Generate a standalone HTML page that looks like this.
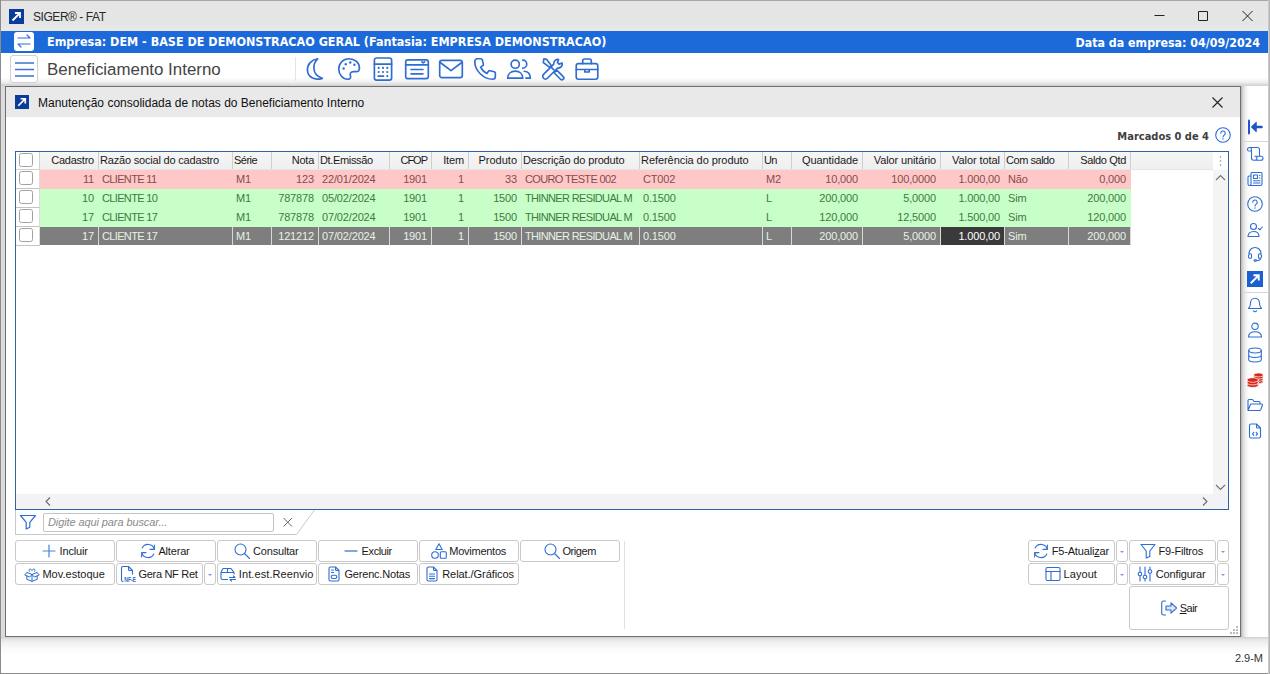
<!DOCTYPE html>
<html lang="pt-BR">
<head>
<meta charset="utf-8">
<title>SIGER - FAT</title>
<style>
*{box-sizing:border-box;margin:0;padding:0}
html,body{width:1270px;height:674px;overflow:hidden;background:#fff}
body{font-family:"Liberation Sans","DejaVu Sans",sans-serif;font-size:11px;color:#1a1a1a;position:relative}
.bold{font-family:"DejaVu Sans Condensed","Liberation Sans",sans-serif;font-weight:bold}
#win{position:absolute;left:0;top:0;width:1270px;height:674px;background:#fff}
#lb{position:absolute;left:0;top:0;width:1px;height:674px;background:#8c8c8c}
#rb{position:absolute;left:1268px;top:0;width:2px;height:674px;background:linear-gradient(90deg,#d8d8d8,#a8a8a8)}
#titlebar{position:absolute;left:1px;top:0;width:1268px;height:31px;background:linear-gradient(#e5e5e5 0,#e5e5e5 75%,#eaeaea 100%);border-top:1px solid #a6a6a6}
#titlebar .ttl{position:absolute;left:32px;top:9px;font-size:12px;color:#2a2a2a;letter-spacing:-.45px;white-space:nowrap}
.appico{position:absolute;width:15px;height:15px}
#bluebar{position:absolute;left:1px;top:31px;width:1268px;height:22px;background:#1c69d9;color:#fff}
#bluebar .l{position:absolute;left:46px;top:3px;font-size:12.46px;white-space:nowrap}
#bluebar .r{position:absolute;right:9px;top:5px;font-size:12.3px;white-space:nowrap}
#swap{position:absolute;left:13px;top:1px;width:20px;height:19px;background:#fff;border-radius:3px}
#toolbar{position:absolute;left:1px;top:53px;width:1268px;height:33px;background:linear-gradient(#fff 0,#fff 74%,#f0f0f0 88%,#cfcfcf 100%)}
#toolbar .name{position:absolute;left:46px;top:7px;font-size:16.9px;color:#444;white-space:nowrap}
#ham{position:absolute;left:9px;top:2px;width:28px;height:28px;border:1px solid #d0d0d0;border-radius:3px;background:#fff}
#tsep{position:absolute;left:294px;top:4px;width:1px;height:24px;background:#e4e4e4}
.tic{position:absolute;top:2px;width:28px;height:28px}
#mdi{position:absolute;left:1px;top:86px;width:1268px;height:559px;background:#fff}
#status{position:absolute;left:1px;top:637px;width:1268px;height:37px;background:linear-gradient(#cdcdcd 0,#e4e4e4 2px,#f1f1f1 6px,#fafafa 12px,#fff 18px);border-bottom:1px solid #8c8c8c}
#status span{position:absolute;right:6px;top:15px;font-size:11px;color:#333}
#side{position:absolute;left:1241px;top:86px;width:28px;height:551px;background:linear-gradient(90deg,#b4b4b4 0,#dadada 2px,#f2f2f2 5px,#fff 8px)}
.sic{position:absolute;left:5px;width:18px;height:18px}
.ssep{position:absolute;left:1px;width:27px;height:1px;background:#d6d6d6}
#modal{position:absolute;left:5px;top:86px;width:1236px;height:551px;background:#fff;border:1px solid #6e6e6e;}
#lstrip{position:absolute;left:1px;top:86px;width:4px;height:551px;background:#dcdcdc}
#rsh{position:absolute;left:1241px;top:86px;width:8px;height:551px;background:linear-gradient(90deg,#b4b4b4 0,#dadada 2px,#f2f2f2 5px,#fff 8px)}
#mtitle{position:absolute;left:0;top:0;width:1234px;height:30px;background:#e9e9e9}
#mtitle .t{position:absolute;left:32px;top:9px;font-size:12px;color:#111;white-space:nowrap}
#marc{position:absolute;right:31px;top:43px;font-size:11px;color:#404040;white-space:nowrap}
/* grid */
#grid{position:absolute;left:9px;top:64px;width:1214px;height:359px;border:1px solid #345fa9;background:#fff;overflow:hidden}
.ghead{position:absolute;left:0;top:0;width:1197px;height:18px;background:linear-gradient(#f6f6f6,#efefef);border-bottom:1px solid #e6e6e6}
.hcb{position:absolute;left:0;top:0;width:24px;height:18px;background:#fff;border-right:1px solid #cfcfcf;border-bottom:1px solid #cfcfcf}
.hc{position:absolute;top:0;height:17px;line-height:17px;padding:0 4px 0 1px;border-right:1px solid #cfcfcf;white-space:nowrap;overflow:hidden;letter-spacing:-.2px;color:#1a1a1a}
.hc.r{text-align:right}
.cb{position:absolute;width:14px;height:14px;border:1px solid #a2a2a2;border-radius:2.5px;background:#fff}
.rowcb{position:absolute;left:0;width:24px;height:19px;background:#fff;border-right:1px solid #dcdcdc;border-bottom:1px solid #c4c4c4}
.row{position:absolute;left:24px;width:1091px;height:19px}
.row.p{background:#ffc8c8;color:#8a4a4a}
.row.g{background:#c8ffc8;color:#3f7a3f}
.row.s{background:#7e7e7e;color:#e6f2e6;height:18px}
.c{position:absolute;top:0;height:19px;line-height:19px;padding:0 4px 0 3px;border-right:1px solid transparent;white-space:nowrap;overflow:hidden;letter-spacing:-.15px}
.c.r{text-align:right}
.c.up{letter-spacing:-.65px}
.row.s .c{border-right-color:#d8d8d8;height:18px}
.c.foc{background:#3a3a3a;color:#fff}
#vsb{position:absolute;left:1197px;top:0;width:15px;height:342px;background:#f4f4f4}
#hsb{position:absolute;left:0;top:342px;width:1212px;height:15px;background:#f3f3f5}
/* filter */
#fbar{position:absolute;left:9px;top:423px;width:320px;height:26px}
#finput{position:absolute;left:28px;top:3px;width:231px;height:19px;border:1px solid #c4c4c4;border-radius:2px;background:#fff;font-style:italic;color:#8a8a8a;padding:0 0 0 4px;line-height:16px;letter-spacing:-.1px;white-space:nowrap}
/* buttons */
.btn{position:absolute;height:21px;border:1px solid #c9c9c9;border-radius:3px;background:#fff;white-space:nowrap;letter-spacing:-.2px;color:#1a1a1a}
.btn svg{position:absolute}
.btn span{position:absolute;top:0;line-height:20px}
.btn.dd i{position:absolute;left:3px;top:10px;width:0;height:0;border-left:2px solid transparent;border-right:2px solid transparent;border-top:2px solid #7a9bd8}
#vsep{position:absolute;left:618px;top:454px;width:1px;height:88px;background:#e0e0e0}
</style>
</head>
<body>
<div id="win">
  <div id="titlebar">
    <svg class="appico" style="left:8px;top:8px" viewBox="0 0 15 15"><rect width="15" height="15" fill="#0b3c9c"/><path d="M3.5 11.5 L10.5 4.5 M6 4 H11 V9" stroke="#fff" stroke-width="1.8" fill="none"/></svg>
    <div class="ttl">SIGER® - FAT</div>
    <svg style="position:absolute;left:1150px;top:5px;width:110px;height:22px" viewBox="1151 6 110 22" fill="none" stroke="#222" stroke-width="1"><path d="M1154.5 15.5h10M1198.5 11.5h9v9h-9zM1242.5 11l10 10M1252.5 11l-10 10"/></svg>
  </div>
  <div id="bluebar">
    <div id="swap"><svg style="position:absolute;left:2px;top:1px;width:16px;height:16px" viewBox="0 0 16 16" fill="none" stroke="#2f6dd2" stroke-width="1.2" stroke-linecap="round" stroke-linejoin="round"><path d="M2 5h12l-3-3M14 11H2l3 3"/></svg></div>
    <div class="l bold">Empresa: DEM - BASE DE DEMONSTRACAO GERAL (Fantasia: EMPRESA DEMONSTRACAO)</div>
    <div class="r bold">Data da empresa: 04/09/2024</div>
  </div>
  <div id="toolbar">
    <div id="ham"><svg style="position:absolute;left:4px;top:5px;width:19px;height:17px" viewBox="0 0 19 17" fill="none" stroke="#3c74d0" stroke-width="1.5"><path d="M0 2h19M0 8.5h19M0 15h19"/></svg></div>
    <div class="name">Beneficiamento Interno</div>
    <div id="tsep"></div>
    <svg class="tic" style="left:300px" viewBox="-1 -1 26 26" fill="none" stroke="#2f6dd2" stroke-width="1.55" stroke-linecap="round" stroke-linejoin="round"><path d="M14.5 2.5C8.5 3.5 4.5 8 5 13.5c.5 6 6.500 9.500 13.800 7.200C14 19 11.200 15.500 11 11.500 10.800 8 12 4.800 14.500 2.500z"/></svg>
    <svg class="tic" style="left:334px" viewBox="-1 -1 26 26" fill="none" stroke="#2f6dd2" stroke-width="1.55" stroke-linecap="round" stroke-linejoin="round"><path d="M12 2.5C6.5 2.5 2.5 6.8 2.5 12c0 5.2 3.8 9.5 8.5 9.5 2.3 0 2.9-1.6 2.3-3.3-.7-2 .4-3.7 2.7-3.7h2.5c2 0 3.2-1.3 3.2-3.2C21.7 6.3 17.5 2.5 12 2.5z"/><g fill="#2f6dd2" stroke="none"><circle cx="7" cy="11.5" r="1.1"/><circle cx="9" cy="7.5" r="1.1"/><circle cx="13.2" cy="6" r="1.1"/><circle cx="17" cy="8" r="1.1"/></g></svg>
    <svg class="tic" style="left:368px" viewBox="-1 -1 26 26" fill="none" stroke="#2f6dd2" stroke-width="1.55" stroke-linecap="round" stroke-linejoin="round"><rect x="4" y="1.8" width="16" height="20.5" rx="2"/><path d="M4 7.5h16"/><g fill="#2f6dd2" stroke="none"><circle cx="8" cy="11" r="1"/><circle cx="12" cy="11" r="1"/><circle cx="16" cy="11" r="1"/><circle cx="8" cy="14.8" r="1"/><circle cx="12" cy="14.8" r="1"/><circle cx="16" cy="14.8" r="1"/><circle cx="16" cy="18.6" r="1"/></g><path d="M7.5 18.6h5"/></svg>
    <svg class="tic" style="left:402px" viewBox="-1 -1 26 26" fill="none" stroke="#2f6dd2" stroke-width="1.55" stroke-linecap="round" stroke-linejoin="round"><rect x="1.5" y="3.5" width="21" height="17.5" rx="2"/><path d="M1.5 8.2h21M6.5 12.5h11M6.5 16.5h11M16.5 5.3l1.3 1.1 1.3-1.1"/></svg>
    <svg class="tic" style="left:436px" viewBox="-1 -1 26 26" fill="none" stroke="#2f6dd2" stroke-width="1.55" stroke-linecap="round" stroke-linejoin="round"><rect x="1.5" y="4" width="21" height="16" rx="2"/><path d="M2 6l10 7.5L22 6"/></svg>
    <svg class="tic" style="left:470px" viewBox="-1 -1 26 26" fill="none" stroke="#2f6dd2" stroke-width="1.55" stroke-linecap="round" stroke-linejoin="round"><path d="M5 2.5h3.3c.6 0 1 .4 1.2 1l1 4c.1.6-.1 1.1-.6 1.4L8 10.3c1.2 2.7 3.2 4.7 5.8 5.8l1.4-1.9c.3-.5.9-.7 1.4-.6l4 1c.6.2 1 .6 1 1.2V19c0 1.4-1.1 2.5-2.5 2.5C10.5 21.5 2.5 13.5 2.5 5c0-1.4 1.1-2.5 2.5-2.5z"/></svg>
    <svg class="tic" style="left:504px" viewBox="-1 -1 26 26" fill="none" stroke="#2f6dd2" stroke-width="1.55" stroke-linecap="round" stroke-linejoin="round"><circle cx="8.5" cy="7.5" r="3.8"/><path d="M1.5 20.5c0-4 3-6.5 7-6.5s7 2.5 7 6.5z"/><path d="M15.5 3.8a3.7 3.7 0 0 1 0 7.4M18.5 20.5h4c0-3.8-2.3-6-5.5-6.4"/></svg>
    <svg class="tic" style="left:538px" viewBox="-1 -1 26 26" fill="none" stroke="#2f6dd2" stroke-width="1.55" stroke-linecap="round" stroke-linejoin="round"><path d="M3.5 2.5l2.5.5 4.5 6-1.5 1.5-6-4.5zM9.8 9.8l3 3M13 15.5l2.5-2.5 6 6c.7.7.7 1.8 0 2.5s-1.8.7-2.5 0z"/><path d="M20.5 6.5l-2.8 1-1.5-1.5 1-2.8c-2.2-.5-4.7 1.3-4.5 4.3L3.2 17c-1 1-1 2.6 0 3.6s2.6 1 3.6 0l9.5-9.5c3 .3 4.8-2.3 4.2-4.6z"/></svg>
    <svg class="tic" style="left:572px" viewBox="-1 -1 26 26" fill="none" stroke="#2f6dd2" stroke-width="1.55" stroke-linecap="round" stroke-linejoin="round"><rect x="2" y="7" width="20" height="14.5" rx="2"/><path d="M8 7V4.5c0-1 .7-1.8 1.8-1.8h4.4c1 0 1.8.8 1.8 1.8V7M2 12.5h20M10 12.5v2.3h4v-2.3"/></svg>
  </div>
  <div id="mdi"></div>
  <div id="side"><svg class="sic" style="top:32.0px" viewBox="-1 -1 18 18" fill="none" stroke="#2f6dd2" stroke-width="1.1" stroke-linecap="round" stroke-linejoin="round"><path d="M2 1.5v13" stroke="#1f55c4" stroke-width="2"/><path d="M14.5 8H7" stroke="#1f55c4" stroke-width="2.6"/><path d="M9 3.5L4.3 8 9 12.5z" fill="#1f55c4" stroke="#1f55c4" stroke-width="1"/></svg>
    <svg class="sic" style="top:58.5px" viewBox="-1 -1 18 18" fill="none" stroke="#2f6dd2" stroke-width="1.1" stroke-linecap="round" stroke-linejoin="round"><path d="M4.5 5V3.5a2 2 0 0 0-4 0c0 .8.5 1.5 1.5 1.5h2.5v7a2.2 2.2 0 0 0 2.2 2.2h7.3a2 2 0 0 0 0-4h-6a2 2 0 0 1 0 4M2.5 1.5h8a2 2 0 0 1 2 2v6.5"/></svg>
    <svg class="sic" style="top:84.0px" viewBox="-1 -1 18 18" fill="none" stroke="#2f6dd2" stroke-width="1.1" stroke-linecap="round" stroke-linejoin="round"><path d="M3.5 5H2a1 1 0 0 0-1 1v7a1.5 1.5 0 0 0 3 0V2.5a1 1 0 0 1 1-1h9a1 1 0 0 1 1 1V13a1.5 1.5 0 0 1-1.5 1.5h-11"/><rect x="6.5" y="4" width="4" height="3.5"/><path d="M12.5 4.5h.5M12.5 7h.5M6.5 9.8h6.5M6.5 12h6.5"/></svg>
    <svg class="sic" style="top:109.0px" viewBox="-1 -1 18 18" fill="none" stroke="#2f6dd2" stroke-width="1.1" stroke-linecap="round" stroke-linejoin="round"><circle cx="8" cy="8" r="7.3"/><path d="M5.8 6.2a2.2 2.2 0 1 1 3.4 1.9c-.8.5-1.2.9-1.2 1.8"/><circle cx="8" cy="12" r=".7" fill="#2f6dd2" stroke="none"/></svg>
    <svg class="sic" style="top:134.5px" viewBox="-1 -1 18 18" fill="none" stroke="#2f6dd2" stroke-width="1.1" stroke-linecap="round" stroke-linejoin="round"><circle cx="6.5" cy="4.5" r="3"/><path d="M1 14.5c0-3 2.2-5 5.5-5s5.5 2 5.5 5zM11.5 6.5l1.3 1.3 2.5-2.8" /></svg>
    <svg class="sic" style="top:158.7px" viewBox="-1 -1 18 18" fill="none" stroke="#2f6dd2" stroke-width="1.1" stroke-linecap="round" stroke-linejoin="round"><path d="M2 9V7.5a6 6 0 0 1 12 0V9M2 7.8h1.5c.6 0 1 .4 1 1v2.5c0 .6-.4 1-1 1H3a1.5 1.5 0 0 1-1.5-1.5V9.3M14 7.8h-1.5c-.6 0-1 .4-1 1v2.5c0 .6.4 1 1 1h.5a1.5 1.5 0 0 0 1.5-1.5V9.3M13.5 12.3c0 1.5-1 2.2-2.5 2.2H9"/><rect x="7" y="13.7" width="2.5" height="1.6" rx=".8"/></svg>
    <svg class="sic" style="top:184.0px;left:6px;width:16px;height:16px;top:185px" viewBox="0 0 15 15"><rect width="15" height="15" fill="#1c5fd0"/><path d="M3.5 11.5L10.5 4.5M6 4H11V9" stroke="#fff" stroke-width="1.8" fill="none"/></svg>
    <svg class="sic" style="top:210.0px" viewBox="-1 -1 18 18" fill="none" stroke="#2f6dd2" stroke-width="1.1" stroke-linecap="round" stroke-linejoin="round"><path d="M8 1.2c-2.8 0-4.5 2-4.5 4.8 0 3-1 4.5-2 5.5h13c-1-1-2-2.5-2-5.5 0-2.8-1.7-4.8-4.5-4.8zM6.5 13.8c.3.7.8 1 1.5 1s1.2-.3 1.5-1"/></svg>
    <svg class="sic" style="top:235.0px" viewBox="-1 -1 18 18" fill="none" stroke="#2f6dd2" stroke-width="1.1" stroke-linecap="round" stroke-linejoin="round"><circle cx="8" cy="4.3" r="3.2"/><path d="M1.5 15c0-3.5 2.7-5.3 6.5-5.3s6.5 1.8 6.5 5.3z"/></svg>
    <svg class="sic" style="top:260.0px" viewBox="-1 -1 18 18" fill="none" stroke="#2f6dd2" stroke-width="1.1" stroke-linecap="round" stroke-linejoin="round"><ellipse cx="8" cy="3.5" rx="6.3" ry="2.5"/><path d="M1.7 3.5v9c0 1.4 2.8 2.5 6.3 2.5s6.3-1.1 6.3-2.5v-9M1.7 8c0 1.4 2.8 2.5 6.3 2.5s6.3-1.1 6.3-2.5"/></svg>
    <svg class="sic" style="top:285.0px" viewBox="-1 -1 18 18" fill="none" stroke="#2f6dd2" stroke-width="1.1" stroke-linecap="round" stroke-linejoin="round"><g stroke="#fff" stroke-width=".7"><ellipse cx="11.5" cy="9.5" rx="4.8" ry="2" fill="#d8281c"/><ellipse cx="11.5" cy="7.3" rx="4.8" ry="2" fill="#d8281c"/><ellipse cx="11.5" cy="5.1" rx="4.8" ry="2" fill="#d8281c"/><ellipse cx="11.5" cy="2.9" rx="4.8" ry="2" fill="#d8281c"/><ellipse cx="5.8" cy="13.2" rx="5.8" ry="2.3" fill="#d8281c"/><ellipse cx="5.8" cy="10.6" rx="5.8" ry="2.3" fill="#d8281c"/><ellipse cx="5.8" cy="8" rx="5.8" ry="2.3" fill="#d8281c"/></g></svg>
    <svg class="sic" style="top:310.0px" viewBox="-1 -1 18 18" fill="none" stroke="#2f6dd2" stroke-width="1.1" stroke-linecap="round" stroke-linejoin="round"><path d="M1 12.5V3.5a1 1 0 0 1 1-1h3.5l1.5 2h5a1 1 0 0 1 1 1V7M1 13.5l2.3-5.8c.2-.4.5-.7 1-.7h10.2c.7 0 1.1.6.9 1.2l-1.7 4.6c-.2.4-.5.7-1 .7z"/></svg>
    <svg class="sic" style="top:335.5px" viewBox="-1 -1 18 18" fill="none" stroke="#2f6dd2" stroke-width="1.1" stroke-linecap="round" stroke-linejoin="round"><path d="M9.5 1H4a1.5 1.5 0 0 0-1.5 1.5v11A1.5 1.5 0 0 0 4 15h8a1.5 1.5 0 0 0 1.5-1.5V5zM9.5 1v3a1 1 0 0 0 1 1h3M6.8 9.3L5.5 10.8l1.3 1.5M9.2 9.3l1.3 1.5-1.3 1.5" /></svg>
    <div class="ssep" style="top:55px"></div><div class="ssep" style="top:206px"></div></div>
  <div id="status"><span>2.9-M</span></div>
  <div id="lstrip"></div>
  <div id="modal">
    <div id="mtitle">
      <svg class="appico" style="left:9px;top:8px;width:14px;height:14px" viewBox="0 0 15 15"><rect width="15" height="15" fill="#0b3c9c"/><path d="M3.5 11.5 L10.5 4.5 M6 4 H11 V9" stroke="#fff" stroke-width="1.8" fill="none"/></svg>
      <svg style="position:absolute;left:1206px;top:10px;width:11px;height:11px" viewBox="0 0 11 11" stroke="#222" stroke-width="1.1"><path d="M.5.5l10 10M10.5.5l-10 10"/></svg>
      <div class="t">Manutenção consolidada de notas do Beneficiamento Interno</div>
    </div>
    <div id="marc" class="bold">Marcados 0 de 4</div>
    <svg style="position:absolute;left:1208px;top:39px;width:18px;height:18px" viewBox="-1 -1 18 18" fill="none" stroke="#2f6dd2" stroke-width="1.1" stroke-linecap="round"><circle cx="8" cy="8" r="7.3"/><path d="M5.8 6.2a2.2 2.2 0 1 1 3.4 1.9c-.8.5-1.2.9-1.2 1.8"/><circle cx="8" cy="12" r=".7" fill="#2f6dd2" stroke="none"/></svg>
    <div id="grid">
<div class="ghead"></div>
<div class="hcb"><div class="cb" style="left:3px;top:1px"></div></div>
<div class="hc r" style="left:25px;width:58px;letter-spacing:-0.23px">Cadastro</div>
<div class="hc l" style="left:83px;width:134px;letter-spacing:-0.19px">Razão social do cadastro</div>
<div class="hc l" style="left:217px;width:39px;letter-spacing:-0.50px">Série</div>
<div class="hc r" style="left:256px;width:47px;letter-spacing:-0.26px">Nota</div>
<div class="hc l" style="left:303px;width:71px;letter-spacing:-0.34px">Dt.Emissão</div>
<div class="hc r" style="left:374px;width:42px;letter-spacing:-1.00px">CFOP</div>
<div class="hc r" style="left:416px;width:37px;letter-spacing:-0.13px">Item</div>
<div class="hc r" style="left:453px;width:53px;letter-spacing:-0.00px">Produto</div>
<div class="hc l" style="left:506px;width:118px;letter-spacing:-0.16px">Descrição do produto</div>
<div class="hc l" style="left:624px;width:123px;letter-spacing:-0.06px">Referência do produto</div>
<div class="hc l" style="left:747px;width:29px;letter-spacing:-0.60px">Un</div>
<div class="hc r" style="left:776px;width:71px;letter-spacing:-0.10px">Quantidade</div>
<div class="hc r" style="left:847px;width:78px;letter-spacing:-0.13px">Valor unitário</div>
<div class="hc r" style="left:925px;width:64px;letter-spacing:-0.07px">Valor total</div>
<div class="hc l" style="left:989px;width:64px;letter-spacing:-0.46px">Com saldo</div>
<div class="hc r" style="left:1053px;width:62px;letter-spacing:-0.35px">Saldo Qtd</div>
<div class="hc" style="left:1115px;width:82px;border-right:0"></div>
<div class="rowcb" style="top:18px"><div class="cb" style="left:3px;top:1px"></div></div>
<div class="row p" style="top:18px">
<div class="c r" style="left:0px;width:59px">11</div>
<div class="c l up" style="left:59px;width:134px">CLIENTE 11</div>
<div class="c l" style="left:193px;width:39px">M1</div>
<div class="c r" style="left:232px;width:47px">123</div>
<div class="c l" style="left:279px;width:71px">22/01/2024</div>
<div class="c r" style="left:350px;width:42px">1901</div>
<div class="c r" style="left:392px;width:37px">1</div>
<div class="c r" style="left:429px;width:53px">33</div>
<div class="c l up" style="left:482px;width:118px">COURO TESTE 002</div>
<div class="c l" style="left:600px;width:123px">CT002</div>
<div class="c l" style="left:723px;width:29px">M2</div>
<div class="c r" style="left:752px;width:71px">10,000</div>
<div class="c r" style="left:823px;width:78px">100,0000</div>
<div class="c r" style="left:901px;width:64px">1.000,00</div>
<div class="c l" style="left:965px;width:64px">Não</div>
<div class="c r" style="left:1029px;width:62px">0,000</div>
</div>
<div class="rowcb" style="top:37px"><div class="cb" style="left:3px;top:1px"></div></div>
<div class="row g" style="top:37px">
<div class="c r" style="left:0px;width:59px">10</div>
<div class="c l up" style="left:59px;width:134px">CLIENTE 10</div>
<div class="c l" style="left:193px;width:39px">M1</div>
<div class="c r" style="left:232px;width:47px">787878</div>
<div class="c l" style="left:279px;width:71px">05/02/2024</div>
<div class="c r" style="left:350px;width:42px">1901</div>
<div class="c r" style="left:392px;width:37px">1</div>
<div class="c r" style="left:429px;width:53px">1500</div>
<div class="c l up" style="left:482px;width:118px">THINNER RESIDUAL M</div>
<div class="c l" style="left:600px;width:123px">0.1500</div>
<div class="c l" style="left:723px;width:29px">L</div>
<div class="c r" style="left:752px;width:71px">200,000</div>
<div class="c r" style="left:823px;width:78px">5,0000</div>
<div class="c r" style="left:901px;width:64px">1.000,00</div>
<div class="c l" style="left:965px;width:64px">Sim</div>
<div class="c r" style="left:1029px;width:62px">200,000</div>
</div>
<div class="rowcb" style="top:56px"><div class="cb" style="left:3px;top:1px"></div></div>
<div class="row g" style="top:56px">
<div class="c r" style="left:0px;width:59px">17</div>
<div class="c l up" style="left:59px;width:134px">CLIENTE 17</div>
<div class="c l" style="left:193px;width:39px">M1</div>
<div class="c r" style="left:232px;width:47px">787878</div>
<div class="c l" style="left:279px;width:71px">07/02/2024</div>
<div class="c r" style="left:350px;width:42px">1901</div>
<div class="c r" style="left:392px;width:37px">1</div>
<div class="c r" style="left:429px;width:53px">1500</div>
<div class="c l up" style="left:482px;width:118px">THINNER RESIDUAL M</div>
<div class="c l" style="left:600px;width:123px">0.1500</div>
<div class="c l" style="left:723px;width:29px">L</div>
<div class="c r" style="left:752px;width:71px">120,000</div>
<div class="c r" style="left:823px;width:78px">12,5000</div>
<div class="c r" style="left:901px;width:64px">1.500,00</div>
<div class="c l" style="left:965px;width:64px">Sim</div>
<div class="c r" style="left:1029px;width:62px">120,000</div>
</div>
<div class="rowcb" style="top:75px"><div class="cb" style="left:3px;top:1px"></div></div>
<div class="row s" style="top:75px">
<div class="c r" style="left:0px;width:59px">17</div>
<div class="c l up" style="left:59px;width:134px">CLIENTE 17</div>
<div class="c l" style="left:193px;width:39px">M1</div>
<div class="c r" style="left:232px;width:47px">121212</div>
<div class="c l" style="left:279px;width:71px">07/02/2024</div>
<div class="c r" style="left:350px;width:42px">1901</div>
<div class="c r" style="left:392px;width:37px">1</div>
<div class="c r" style="left:429px;width:53px">1500</div>
<div class="c l up" style="left:482px;width:118px">THINNER RESIDUAL M</div>
<div class="c l" style="left:600px;width:123px">0.1500</div>
<div class="c l" style="left:723px;width:29px">L</div>
<div class="c r" style="left:752px;width:71px">200,000</div>
<div class="c r" style="left:823px;width:78px">5,0000</div>
<div class="c r foc" style="left:901px;width:64px">1.000,00</div>
<div class="c l" style="left:965px;width:64px">Sim</div>
<div class="c r" style="left:1029px;width:62px">200,000</div>
</div>
      <div id="vsb"><div style="position:absolute;left:0;top:0;width:15px;height:18px;background:#fff"></div><svg style="position:absolute;left:0;top:0;width:15px;height:341px" viewBox="0 0 15 341" fill="none" stroke="#707070" stroke-width="1.1"><path d="M3 28l4.5-4.5L12 28M3 333l4.5 4.5L12 333"/><g fill="#6f93d6" stroke="none"><circle cx="7.5" cy="5" r=".8"/><circle cx="7.5" cy="9" r=".8"/><circle cx="7.5" cy="13" r=".8"/></g></svg></div>
      <div id="hsb"><svg style="position:absolute;left:0;top:0;width:1212px;height:16px" viewBox="0 0 1212 16" fill="none" stroke="#6a6a6a" stroke-width="1.1"><path d="M34 3.5l-4 4 4 4M1187 3.5l4 4-4 4"/></svg></div>
    </div>
    <div id="fbar">
      <svg style="position:absolute;left:0;top:0;width:320px;height:26px" viewBox="0 0 320 26" fill="none" stroke="#c8c8c8" stroke-width="1"><path d="M.5 0V24.5H281.5L299.5 0"/><path d="M268.5 8l8.5 8.5M277 8l-8.5 8.5" stroke="#666" stroke-width="1"/><path d="M5.5 5.5h15l-5.7 6.8v5l-3.6 1.7v-6.7z" stroke="#2f6dd2" stroke-width="1.2" stroke-linejoin="round"/></svg>
      <div id="finput">Digite aqui para buscar...</div>
    </div>
    <div id="vsep"></div>
    <svg style="position:absolute;left:1224px;top:539px;width:9px;height:9px" viewBox="0 0 9 9" fill="#bcbcbc"><rect x="6" y="0" width="2" height="2"/><rect x="3" y="3" width="2" height="2"/><rect x="6" y="3" width="2" height="2"/><rect x="0" y="6" width="2" height="2"/><rect x="3" y="6" width="2" height="2"/><rect x="6" y="6" width="2" height="2"/></svg>
<div class="btn" style="left:9px;top:453px;width:100px;height:22px"><svg style="left:25.0px;top:2.0px;width:16px;height:16px" viewBox="0 0 16 16" fill="none" stroke="#2f6dd2" stroke-width="1.1" stroke-linecap="round" stroke-linejoin="round"><path d="M8 2v12M2 8h12" stroke-width="1.2" stroke="#4a82dc"/></svg><span style="left:43.6px;line-height:20px;letter-spacing:-0.19px">Incluir</span></div>
<div class="btn" style="left:110px;top:453px;width:100px;height:22px"><svg style="left:23.0px;top:2.0px;width:16px;height:16px" viewBox="0 0 16 16" fill="none" stroke="#2f6dd2" stroke-width="1.1" stroke-linecap="round" stroke-linejoin="round"><path transform="translate(8 8) scale(1.08) translate(-8 -8)" stroke-width="1" d="M13.8 6.5A6 6 0 0 0 2.6 5.2M2.2 9.5a6 6 0 0 0 11.2 1.3M13.9 2.5v4h-4M2.1 13.5v-4h4"/></svg><span style="left:41.4px;line-height:20px;letter-spacing:-0.17px">Alterar</span></div>
<div class="btn" style="left:211px;top:453px;width:100px;height:22px"><svg style="left:16.0px;top:2.0px;width:16px;height:16px" viewBox="0 0 16 16" fill="none" stroke="#2f6dd2" stroke-width="1.1" stroke-linecap="round" stroke-linejoin="round"><circle cx="6.5" cy="6.5" r="5.5"/><path d="M10.5 10.5l5 5"/></svg><span style="left:35.0px;line-height:20px;letter-spacing:-0.18px">Consultar</span></div>
<div class="btn" style="left:312px;top:453px;width:100px;height:22px"><svg style="left:24.0px;top:2.0px;width:16px;height:16px" viewBox="0 0 16 16" fill="none" stroke="#2f6dd2" stroke-width="1.1" stroke-linecap="round" stroke-linejoin="round"><path d="M2 8h12" stroke-width="1.3" stroke="#5a8cdc"/></svg><span style="left:42.6px;line-height:20px;letter-spacing:-0.39px">Excluir</span></div>
<div class="btn" style="left:413px;top:453px;width:100px;height:22px"><svg style="left:11.0px;top:2.0px;width:16px;height:16px" viewBox="0 0 16 16" fill="none" stroke="#2f6dd2" stroke-width="1.1" stroke-linecap="round" stroke-linejoin="round"><path d="M8 .8l3.2 5.7H4.8z"/><circle cx="4" cy="12" r="3.3"/><rect x="9.3" y="8.8" width="6" height="6.4" rx="1"/></svg><span style="left:29.3px;line-height:20px;letter-spacing:-0.26px">Movimentos</span></div>
<div class="btn" style="left:514px;top:453px;width:100px;height:22px"><svg style="left:23.0px;top:2.0px;width:16px;height:16px" viewBox="0 0 16 16" fill="none" stroke="#2f6dd2" stroke-width="1.1" stroke-linecap="round" stroke-linejoin="round"><circle cx="6.5" cy="6.5" r="5.5"/><path d="M10.5 10.5l5 5"/></svg><span style="left:41.4px;line-height:20px;letter-spacing:-0.43px">Origem</span></div>
<div class="btn" style="left:9px;top:476px;width:100px;height:22px"><svg style="left:8.0px;top:2.0px;width:16px;height:16px" viewBox="0 0 16 16" fill="none" stroke="#2f6dd2" stroke-width="1.1" stroke-linecap="round" stroke-linejoin="round"><path stroke-width="1" d="M3 6.5l5 2 5-2M3 6.5L.7 9l5 2L8 8.5l2.3 2.5 5-2L13 6.5M2.8 10.2v3.1L8 15.3l5.2-2V10.2M8 8.5v6.8M5.3 5.3C4.3 3.3 6 1.8 8 4.2M10.7 5.3C11.7 3.3 10 1.8 8 4.2"/></svg><span style="left:26.4px;line-height:20px;letter-spacing:0.03px">Mov.estoque</span></div>
<div class="btn" style="left:110px;top:476px;width:87px;height:22px"><svg style="left:2.5px;top:2.0px;width:16px;height:16px" viewBox="0 0 16 16" fill="none" stroke="#2f6dd2" stroke-width="1.1" stroke-linecap="round" stroke-linejoin="round"><path d="M3 15.5A1.5 1.5 0 0 1 1.5 14V2A1.5 1.5 0 0 1 3 .5h5.5l4 4V8M8.5.5V3.5a1 1 0 0 0 1 1h3"/><text x="4.3" y="15.8" font-size="7" font-weight="bold" font-family="Liberation Sans,sans-serif" fill="#2f6dd2" stroke="none" textLength="11.5" lengthAdjust="spacingAndGlyphs">NF-E</text></svg><span style="left:21.5px;line-height:20px;letter-spacing:-0.31px">Gera NF Ret</span></div>
<div class="btn" style="left:211px;top:476px;width:100px;height:22px"><svg style="left:2.0px;top:2.0px;width:16px;height:16px" viewBox="0 0 16 16" fill="none" stroke="#2f6dd2" stroke-width="1.1" stroke-linecap="round" stroke-linejoin="round"><path d="M7.5 13.5h-5A1.5 1.5 0 0 1 1 12V6.5h13V8M1 6.5l1.5-3.3c.2-.5.6-.7 1-.7h7c.4 0 .8.2 1 .7L14 6.5M7.5 2.5v4M9.5 11.5h5.5l-1.5-1.5M15.5 13.5H10l1.5 1.5"/></svg><span style="left:20.8px;line-height:20px;letter-spacing:0.09px">Int.est.Reenvio</span></div>
<div class="btn" style="left:312px;top:476px;width:100px;height:22px"><svg style="left:6.5px;top:2.0px;width:16px;height:16px" viewBox="0 0 16 16" fill="none" stroke="#2f6dd2" stroke-width="1.1" stroke-linecap="round" stroke-linejoin="round"><path d="M9.5 1H4.5A1.5 1.5 0 0 0 3 2.5v11A1.5 1.5 0 0 0 4.5 15h7a1.5 1.5 0 0 0 1.5-1.5V4.5zM9.5 1v2.5a1 1 0 0 0 1 1H13M5.5 4h2M5.5 6.5h2"/><rect x="5.2" y="9.3" width="5.6" height="3.2" rx="1.6"/></svg><span style="left:25.5px;line-height:20px;letter-spacing:-0.20px">Gerenc.Notas</span></div>
<div class="btn" style="left:413px;top:476px;width:100px;height:22px"><svg style="left:4.0px;top:2.0px;width:16px;height:16px" viewBox="0 0 16 16" fill="none" stroke="#2f6dd2" stroke-width="1.1" stroke-linecap="round" stroke-linejoin="round"><path d="M9.5 1H4.5A1.5 1.5 0 0 0 3 2.5v11A1.5 1.5 0 0 0 4.5 15h7a1.5 1.5 0 0 0 1.5-1.5V4.5zM9.5 1v2.5a1 1 0 0 0 1 1H13M5.5 8h5M5.5 10.3h5M5.5 12.6h5"/></svg><span style="left:22.2px;line-height:20px;letter-spacing:-0.06px">Relat./Gráficos</span></div>
<div class="btn" style="left:1022px;top:453px;width:87px;height:22px"><svg style="left:4.0px;top:2.0px;width:16px;height:16px" viewBox="0 0 16 16" fill="none" stroke="#2f6dd2" stroke-width="1.1" stroke-linecap="round" stroke-linejoin="round"><path transform="translate(8 8) scale(1.08) translate(-8 -8)" stroke-width="1" d="M13.8 6.5A6 6 0 0 0 2.6 5.2M2.2 9.5a6 6 0 0 0 11.2 1.3M13.9 2.5v4h-4M2.1 13.5v-4h4"/></svg><span style="left:22.7px;line-height:20px;letter-spacing:-0.17px">F5-Atuali<u>z</u>ar</span></div>
<div class="btn" style="left:1123px;top:453px;width:87px;height:22px"><svg style="left:10.0px;top:2.0px;width:16px;height:16px" viewBox="0 0 16 16" fill="none" stroke="#2f6dd2" stroke-width="1.1" stroke-linecap="round" stroke-linejoin="round"><path d="M1 1.5h14L9.8 8v5.5L6.2 15V8z"/></svg><span style="left:28.5px;line-height:20px;letter-spacing:-0.20px">F9-Filtros</span></div>
<div class="btn" style="left:1022px;top:476px;width:87px;height:22px"><svg style="left:16.0px;top:2.0px;width:16px;height:16px" viewBox="0 0 16 16" fill="none" stroke="#2f6dd2" stroke-width="1.1" stroke-linecap="round" stroke-linejoin="round"><rect x="1" y="1.5" width="14" height="13" rx="1.5"/><path d="M1 5.5h14M6 5.5v9"/></svg><span style="left:34.5px;line-height:20px;letter-spacing:0.08px">Layout</span></div>
<div class="btn" style="left:1123px;top:476px;width:87px;height:22px"><svg style="left:7.0px;top:2.0px;width:16px;height:16px" viewBox="0 0 16 16" fill="none" stroke="#2f6dd2" stroke-width="1.1" stroke-linecap="round" stroke-linejoin="round"><path d="M3 1v5M3 10v5M8 1v8M8 13v2M13 1v2.5M13 7.5V15"/><circle cx="3" cy="8" r="1.8"/><circle cx="8" cy="11" r="1.8"/><circle cx="13" cy="5.5" r="1.8"/></svg><span style="left:25.8px;line-height:20px;letter-spacing:-0.16px">Configurar</span></div>
<div class="btn" style="left:1123px;top:499px;width:100px;height:44px"><svg style="left:31.0px;top:13.0px;width:16px;height:16px" viewBox="0 0 16 16" fill="none" stroke="#2f6dd2" stroke-width="1.1" stroke-linecap="round" stroke-linejoin="round"><path d="M4.5 1H2.5A1.8 1.8 0 0 0 .7 2.8v10.4A1.8 1.8 0 0 0 2.5 15h2"/><path d="M5 6h5V2.8L15.7 8 10 13.2V10H5z" fill="#dbe7fb"/></svg><span style="left:49.7px;line-height:42px;letter-spacing:-0.50px"><u>S</u>air</span></div>
<div class="btn dd" style="left:198px;top:476px;width:12px;height:22px"><i></i></div>
<div class="btn dd" style="left:1110px;top:453px;width:12px;height:22px"><i></i></div>
<div class="btn dd" style="left:1211px;top:453px;width:12px;height:22px"><i></i></div>
<div class="btn dd" style="left:1110px;top:476px;width:12px;height:22px"><i></i></div>
<div class="btn dd" style="left:1211px;top:476px;width:12px;height:22px"><i></i></div>
  </div>
  <div id="lb"></div><div id="rb"></div>
</div>
</body>
</html>
